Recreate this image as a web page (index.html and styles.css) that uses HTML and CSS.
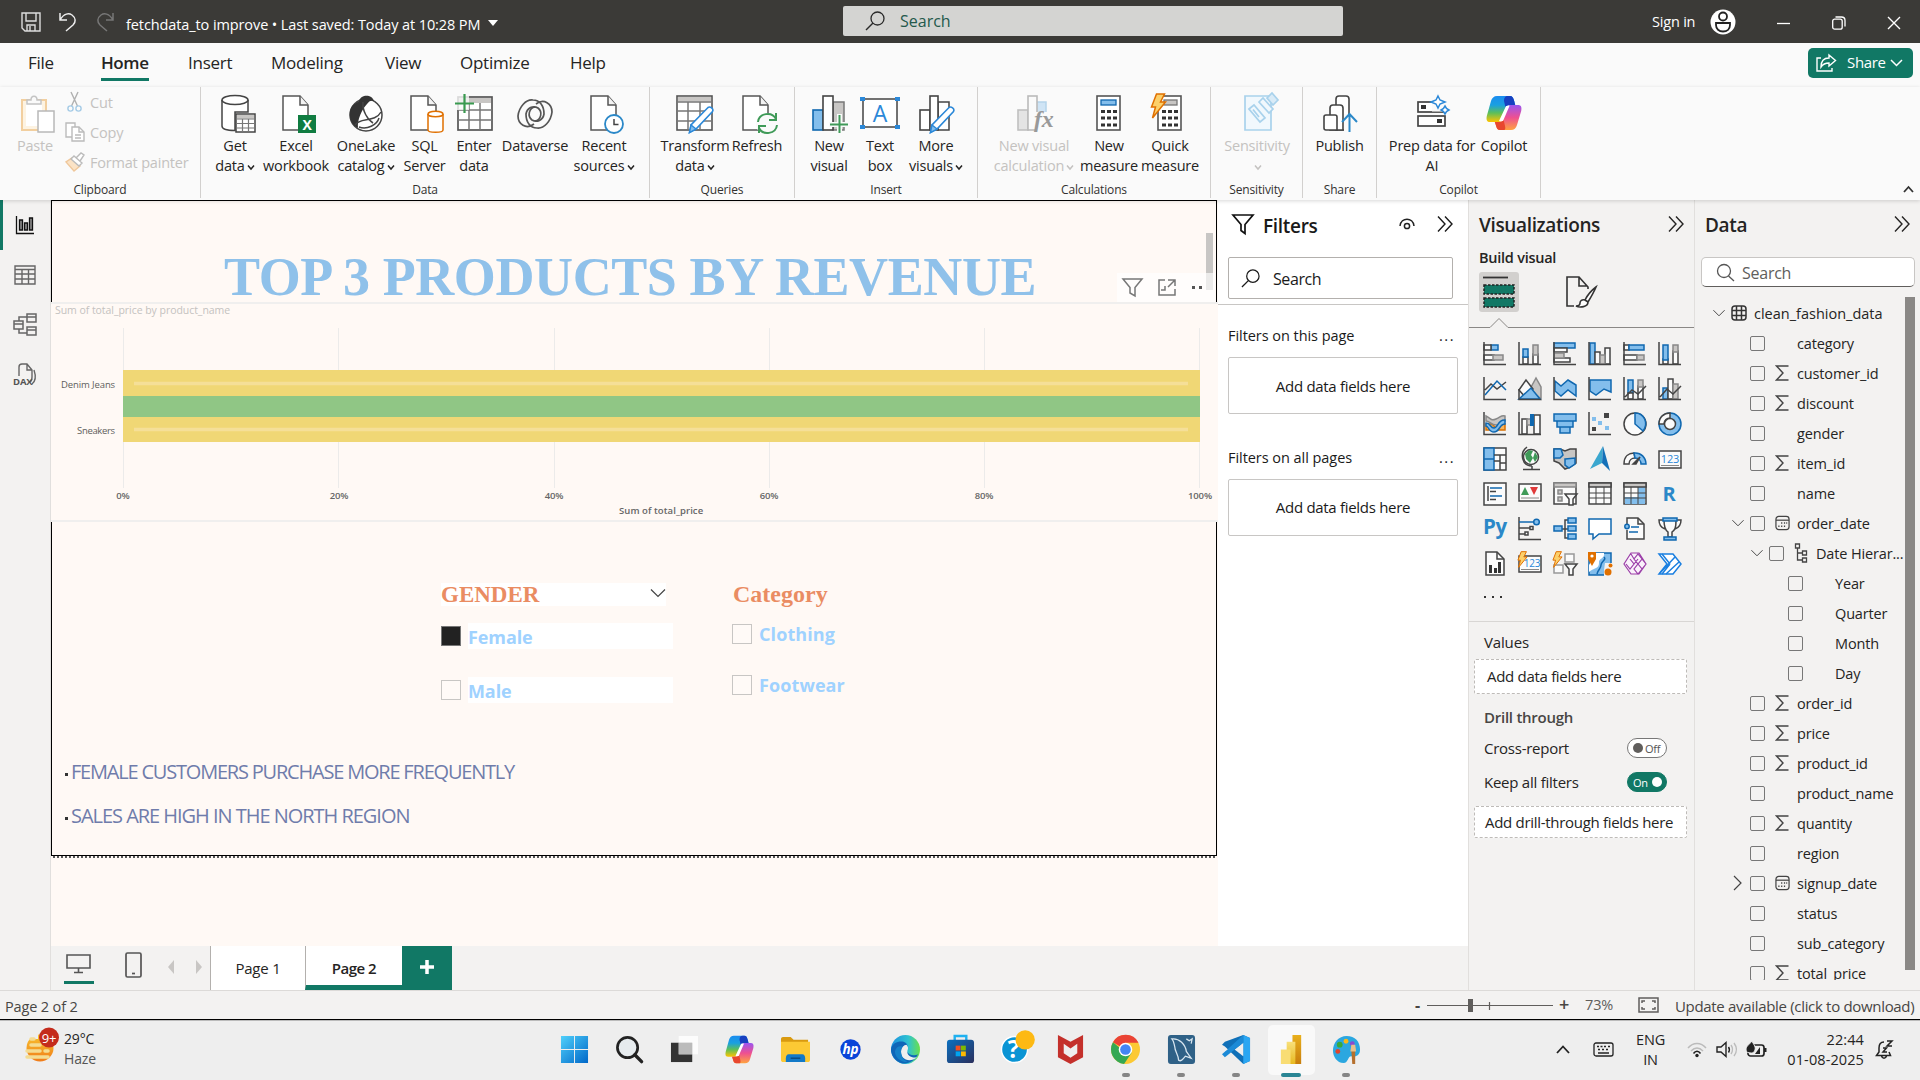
FILE: index.html
```html
<!DOCTYPE html>
<html lang="en">
<head>
<meta charset="utf-8">
<title>fetchdata_to improve</title>
<link rel="stylesheet" href="styles.css">
</head>
<body>
<svg class="defs" width="0" height="0">
  <defs>
    <linearGradient id="cpA" x1="0" y1="0" x2="0" y2="1"><stop offset="0" stop-color="#1a8cf0"/><stop offset=".35" stop-color="#1aa0e0"/><stop offset=".65" stop-color="#5cbf5a"/><stop offset="1" stop-color="#ffc400"/></linearGradient>
    <linearGradient id="cpB" x1="0" y1="0" x2="0" y2="1"><stop offset="0" stop-color="#9a55f0"/><stop offset=".5" stop-color="#ee5091"/><stop offset="1" stop-color="#ffa33f"/></linearGradient>
    <linearGradient id="win" x1="0" y1="0" x2="1" y2="1"><stop offset="0" stop-color="#4fd0fb"/><stop offset="1" stop-color="#0067c8"/></linearGradient>
    <linearGradient id="edg" x1="0" y1="0" x2="1" y2="0"><stop offset="0" stop-color="#1b8fe0"/><stop offset=".6" stop-color="#2fc3d0"/><stop offset="1" stop-color="#6be04a"/></linearGradient>
    <linearGradient id="sto" x1="0" y1="0" x2="1" y2="1"><stop offset="0" stop-color="#0b70c0"/><stop offset="1" stop-color="#2b2f5c"/></linearGradient>
    <linearGradient id="sun" x1="0" y1="0" x2="0" y2="1"><stop offset="0" stop-color="#f8c12e"/><stop offset="1" stop-color="#f07c1a"/></linearGradient>
    <linearGradient id="gold" x1="0" y1="0" x2="0" y2="1"><stop offset="0" stop-color="#e9b01c"/><stop offset="1" stop-color="#c87e0e"/></linearGradient>
    <linearGradient id="gold2" x1="0" y1="0" x2="0" y2="1"><stop offset="0" stop-color="#f8e07a"/><stop offset="1" stop-color="#e8b920"/></linearGradient>
    <symbol id="copilot" viewBox="0 0 36 36">
      <path d="M11 1h13c2.500 0 3.500 2 4.200 5l1 4h-6c-2 0-3 1-3.700 4l-3 9c-1 3-2 4-4 4H4c-3 0-4-2-3.200-6L5 6c.8-3 3-5 6-5z" fill="url(#cpA)"/>
      <path d="M22 1h2c2.500 0 3.500 2 4.200 5l1 4h-6c-2 0-3 1-3.700 2.500L18 6c0-3 1-5 4-5z" fill="#1740c0"/>
      <path d="M25 35H14c-2.500 0-3.500-2-4.200-5l-1-3h5c2 0 3-1 3.700-4l3-9c1-3 2-4 4-4H32c3 0 4 2 3.200 6L31 30c-.8 3-3 5-6 5z" fill="url(#cpB)"/>
      <path d="M14 35c-2.500 0-3.500-2-4.200-5l-1-3h5c2 0 3-1 3.700-2.500L19 31c.5 2 .5 4-1 4z" fill="#e8472f"/>
      <path d="M20 11h3.500L17 26h-4z" fill="#fff"/>
    </symbol>
    <symbol id="sigma" viewBox="0 0 15 16"><path d="M13.500 1H1.500l6.500 7-6.500 7h12" fill="none" stroke="#444" stroke-width="1.400"/></symbol>
    <symbol id="cal" viewBox="0 0 16 16"><rect x="1" y="1" width="14" height="14" rx="3" fill="none" stroke="#444" stroke-width="1.300"/><path d="M1 5h14" stroke="#444" stroke-width="1.300"/><path d="M6.500 8h1.300M9.500 8h1.300M12 8h1M3.500 11.500h1.300M6.500 11.500h1.300M9.500 11.500h1.300" stroke="#444" stroke-width="1.500"/></symbol>
    <symbol id="cd" viewBox="0 0 16 10"><path d="M1 1.500l7 7 7-7" fill="none" stroke="#444" stroke-width="1.200"/></symbol>
    <symbol id="dd" viewBox="0 0 8 7"><path d="M1 1.500l3 3.500 3-3.500" fill="none" stroke="currentColor" stroke-width="1.500"/></symbol>
    <symbol id="dbl" viewBox="0 0 16 18"><path d="M1 1.500l7 7.500-7 7.500M8 1.500l7 7.500-7 7.500" fill="none" stroke="currentColor" stroke-width="1.400"/></symbol>
    <symbol id="doc" viewBox="0 0 36 40"><path d="M5 2h17l8 9v25H5z" fill="#fff" stroke="#555" stroke-width="1.500"/><path d="M22 2v9h8" fill="#f3f3f3" stroke="#555" stroke-width="1.500"/></symbol>
    <symbol id="mag" viewBox="0 0 20 20"><circle cx="12.500" cy="7.500" r="6.500" fill="none" stroke="currentColor" stroke-width="1.300"/><path d="M8 12l-7 7" stroke="currentColor" stroke-width="1.400"/></symbol>
    <symbol id="pencil" viewBox="0 0 26 28"><path d="M20 1.500c2-1.500 6 1 4.500 4L8 23l-6.500 3.500L3 19z" fill="#fff" stroke="#2b88d8" stroke-width="1.600"/><path d="M1.500 26.500L3 19l5 4z" fill="#83beec" stroke="#2b88d8" stroke-width="1.300"/></symbol>
    <symbol id="calc" viewBox="0 0 36 40"><rect x="6" y="2" width="23" height="34" fill="#fff" stroke="#555" stroke-width="1.600"/><path d="M10 16h4v3h-4zM16 16h4v3h-4zM22 16h4v3h-4zM10 22.500h4v3h-4zM16 22.500h4v3h-4zM22 22.500h4v3h-4zM10 29.500h4v3h-4zM16 29.500h4v3h-4zM22 29.500h4v3h-4z" fill="#333"/></symbol>
    <symbol id="bolt" viewBox="0 0 16 26"><path d="M6 1h8l-4 8h5L2 25l3-11H1z" fill="#fcd06a" stroke="#e07000" stroke-width="1.500"/></symbol>
  </defs>
</svg>

<header class="titlebar">
  <svg class="tb-save" width="20" height="20" viewBox="0 0 20 20" fill="none" stroke="#ddd" stroke-width="1.400"><path d="M1 1h18v18H4l-3-3zM5 1v8h10V1M6 19v-6h8v6M9 14v5"/></svg>
  <svg class="tb-undo" width="18" height="20" viewBox="0 0 18 20" fill="none" stroke="#eee" stroke-width="1.500"><path d="M1 1v7h7M1 8c4-7 9-7 12-5 4 3 4 7 1 10l-7 6"/></svg>
  <svg class="tb-redo" width="18" height="20" viewBox="0 0 18 20" fill="none" stroke="#777" stroke-width="1.500"><path d="M17 1v7h-7M17 8C13 1 8 1 5 3 1 6 1 10 4 13l7 6"/></svg>
  <span class="doc-title">fetchdata_to improve • Last saved: Today at 10:28 PM</span>
  <i class="tb-caret"></i>
  <div class="tb-search"><svg width="20" height="20"><use href="#mag"/></svg><span>Search</span></div>
  <span class="signin">Sign in</span>
  <svg class="avatar" width="26" height="26" viewBox="0 0 26 26"><circle cx="13" cy="13" r="12.500" fill="#fff"/><circle cx="13" cy="7.500" r="4" fill="none" stroke="#222" stroke-width="1.800"/><path d="M6 14h14v2c0 4-3 6.500-7 6.500S6 20 6 16z" fill="none" stroke="#222" stroke-width="1.800"/></svg>
  <svg class="wb wb-min" width="14" height="14"><path d="M0 7.500h13" stroke="#fff" stroke-width="1.300"/></svg>
  <svg class="wb wb-res" width="14" height="14" fill="none" stroke="#fff" stroke-width="1.300"><rect x=".7" y="3.200" width="9.500" height="10" rx="2"/><path d="M3.500 1h6c2 0 3.500 1.500 3.500 3.500v6"/></svg>
  <svg class="wb" width="14" height="14"><path d="M1 1l12 12M13 1L1 13" stroke="#fff" stroke-width="1.400"/></svg>
</header>

<nav class="menu">
  <span class="m-file">File</span><span class="m-home active">Home</span><span class="m-insert">Insert</span><span class="m-modeling">Modeling</span><span class="m-view">View</span><span class="m-optimize">Optimize</span><span class="m-help">Help</span>
  <div class="share-btn"><svg width="21" height="18" viewBox="0 0 21 18" fill="none" stroke="#fff" stroke-width="1.400"><path d="M5 4H1v13h15v-3M13 1l6.500 5.500L13 12V9c-4 0-6 1-8 4 0-6 3-9 8-9z"/></svg><span>Share</span><svg width="13" height="8" viewBox="0 0 13 8"><path d="M1 1l5.500 5.500L12 1" fill="none" stroke="#fff" stroke-width="1.500"/></svg></div>
</nav>

<section class="ribbon">
  <div class="group g-clip">
    <div class="tools">
      <div class="rb dim w-paste"><svg width="36" height="40" viewBox="0 0 36 40"><rect x="2" y="6" width="24" height="30" fill="#fdf3e2" stroke="#f2cf9f" stroke-width="2"/><rect x="6" y="9" width="16" height="23" fill="#fff"/><path d="M7 10V6h4c0-5 6-5 6 0h4v4z" fill="#fafafa" stroke="#c4c4c4" stroke-width="1.500"/><rect x="18" y="17" width="16" height="21" fill="#fff" stroke="#b8b8b8" stroke-width="1.500"/></svg><span>Paste</span></div>
      <div class="clip-list dim">
        <div><svg width="20" height="20" viewBox="0 0 20 20" fill="none" stroke="#b0b0b0" stroke-width="1.400"><path d="M6 0l6.500 14M13 0L6.500 14"/><circle cx="5.500" cy="16.500" r="2.600" stroke="#a5cbe6"/><circle cx="13.500" cy="16.500" r="2.600" stroke="#a5cbe6"/></svg><span>Cut</span></div>
        <div><svg width="20" height="20" viewBox="0 0 20 20" fill="#fff" stroke="#bbb" stroke-width="1.400"><path d="M1 1h9v14H1z"/><path d="M7 5h7l5 5v9H7z"/><path d="M14 5v5h5M10 13h6M10 16h6" fill="none"/></svg><span>Copy</span></div>
        <div><svg width="20" height="20" viewBox="0 0 20 20" fill="#fff" stroke="#bbb" stroke-width="1.400"><path d="M7 6l8 8-6 5-8-9z" fill="#fbe3c6" stroke="#efc79b"/><path d="M6 7l3-3 8 7-3 3zM11 6l5-5 3 2-4 6"/></svg><span>Format painter</span></div>
      </div>
    </div>
    <span class="cap">Clipboard</span>
  </div>

  <div class="group g-data">
    <div class="tools">
      <div class="rb w60"><svg class="r3" width="36" height="40" viewBox="0 0 36 40"><path d="M2 6v26c0 3 6 4.500 13 4.500V18h13V6" fill="#fff" stroke="#444" stroke-width="1.500"/><ellipse cx="15" cy="6" rx="13" ry="4.500" fill="#fff" stroke="#444" stroke-width="1.500"/><rect x="16" y="20" width="19" height="18" fill="#fff" stroke="#444" stroke-width="1.500"/><rect x="17" y="21" width="17" height="3.500" fill="#c8c6c4"/><path d="M16 25h19M16 29.500h19M16 34h19M22.500 25v13M28.500 25v13" stroke="#777" stroke-width="1.200"/></svg><span>Get<br>data<svg class="dd" width="8" height="7"><use href="#dd"/></svg></span></div>
      <div class="rb w62"><svg width="36" height="40" viewBox="0 0 36 40"><use href="#doc"/><rect x="20" y="21" width="18" height="18" fill="#107c41"/><text x="29" y="35.500" text-anchor="middle" font-size="14" font-weight="700" fill="#fff">X</text></svg><span>Excel<br>workbook</span></div>
      <div class="rb w78"><svg width="36" height="40" viewBox="0 0 36 40"><ellipse cx="18" cy="21" rx="16" ry="16" fill="#fff" stroke="#444" stroke-width="1.500"/><path d="M11 7C13 0 24 0 26 7c-3-1-5 0-7 3C14 15 9 26 10 34 0 30-1 13 8 9z" fill="#333"/><path d="M15 8c-1 9 5 18 10 21M7 31c5-8 20-2 26-13M11 33c8 3 18-2 20-9" fill="none" stroke="#444" stroke-width="1.500"/></svg><span>OneLake<br>catalog<svg class="dd" width="8" height="7"><use href="#dd"/></svg></span></div>
      <div class="rb w39"><svg width="36" height="40" viewBox="0 0 36 40"><use href="#doc" x="-1"/><path d="M21 20v16c0 3 15 3 15 0V20" fill="#fff" stroke="#e07000" stroke-width="1.500"/><ellipse cx="28.500" cy="20" rx="7.500" ry="2.800" fill="#fff" stroke="#e07000" stroke-width="1.500"/></svg><span>SQL<br>Server</span></div>
      <div class="rb w60"><svg width="40" height="40" viewBox="0 0 40 40"><rect x="4" y="3" width="34" height="33" fill="#fff" stroke="#555" stroke-width="1.700"/><rect x="5" y="4" width="32" height="5" fill="#c8c6c4"/><path d="M4 16h34M4 26h34M15 9v27M26 9v27" stroke="#777" stroke-width="1.500"/><path d="M0 0h15v16H0z" fill="#fafafa" opacity=".8"/><path d="M1 9.500h19M10.500 0v19" stroke="#3a9a50" stroke-width="2.200"/></svg><span>Enter<br>data</span></div>
      <div class="rb w62"><svg width="36" height="40" viewBox="0 0 36 40" fill="none" stroke="#555" stroke-width="1.700"><path d="M17 30C9 36 1 30 1 22 2 13 9 5 16 6c7 0 11 6 11 14-1 6-7 9-12 6-5-4-3-12 3-13"/><path d="M19 10c8-6 16 0 16 8-1 9-8 17-15 16-7 0-11-6-11-14 1-6 7-9 12-6 5 4 3 12-3 13"/></svg><span>Dataverse</span></div>
      <div class="rb w76"><svg width="36" height="40" viewBox="0 0 36 40"><use href="#doc"/><circle cx="28" cy="30" r="9" fill="#fff" stroke="#2b88c8" stroke-width="1.800"/><path d="M28 25v5.500h4.500" fill="none" stroke="#444" stroke-width="1.500"/></svg><span>Recent<br>sources<svg class="dd" width="8" height="7"><use href="#dd"/></svg></span></div>
    </div>
    <span class="cap">Data</span>
  </div>

  <div class="group g-query">
    <div class="tools">
      <div class="rb w66"><svg width="38" height="40" viewBox="0 0 38 40"><rect x="1" y="2" width="35" height="34" fill="#fff" stroke="#555" stroke-width="1.600"/><rect x="2" y="3" width="33" height="4.500" fill="#c8c6c4"/><path d="M1 8h35M1 17h35M1 27h35M12 8v28M24 8v28" stroke="#777" stroke-width="1.500"/><use href="#pencil" x="12" y="12" width="26" height="28"/></svg><span>Transform<br>data<svg class="dd" width="8" height="7"><use href="#dd"/></svg></span></div>
      <div class="rb w58"><svg width="36" height="40" viewBox="0 0 36 40"><use href="#doc" x="-1"/><circle cx="28" cy="30" r="11" fill="#fafafa"/><path d="M19 28c1-9 14-11 18-3M37 19v7h-7M38 31c-1 9-14 11-18 3M20 39v-7h7" fill="none" stroke="#3f9a58" stroke-width="2"/></svg><span>Refresh</span></div>
    </div>
    <span class="cap">Queries</span>
  </div>

  <div class="group g-insert">
    <div class="tools">
      <div class="rb w52"><svg width="36" height="40" viewBox="0 0 36 40"><rect x="22" y="8" width="11" height="28" fill="#c8c6c4" stroke="#777" stroke-width="1.500"/><rect x="2" y="16" width="10" height="20" fill="#83beec" stroke="#1068b0" stroke-width="1.600"/><rect x="12" y="2" width="10" height="34" fill="#fff" stroke="#444" stroke-width="1.600"/><path d="M18 30.500h19M28.500 20v19" stroke="#fafafa" stroke-width="5"/><path d="M19 30.500h18M28.500 21v18" stroke="#3f9a58" stroke-width="2"/></svg><span>New<br>visual</span></div>
      <div class="rb w50"><svg width="40" height="40" viewBox="0 0 40 40"><rect x="3" y="5" width="34" height="28" fill="#fff" stroke="#444" stroke-width="1.500"/><path d="M0 3h5v4H0zM35 3h5v4h-5zM0 31h5v4H0zM35 31h5v4h-5z" fill="#2b88d8"/><text x="20" y="27.500" text-anchor="middle" font-size="23" fill="#2b88d8">A</text></svg><span>Text<br>box</span></div>
      <div class="rb w62"><svg width="36" height="40" viewBox="0 0 36 40"><rect x="20" y="8" width="11" height="28" fill="#fff" stroke="#444" stroke-width="1.500"/><rect x="2" y="16" width="10" height="20" fill="#fff" stroke="#444" stroke-width="1.600"/><rect x="12" y="2" width="8" height="34" fill="#fff" stroke="#444" stroke-width="1.600"/><use href="#pencil" x="11" y="12" width="26" height="28"/></svg><span>More<br>visuals<svg class="dd" width="8" height="7"><use href="#dd"/></svg></span></div>
    </div>
    <span class="cap">Insert</span>
  </div>

  <div class="group g-calc">
    <div class="tools">
      <div class="rb dim w88"><svg width="36" height="40" viewBox="0 0 36 40"><rect x="20" y="8" width="10" height="18" fill="#cfe4f5" stroke="#b5d4ea" stroke-width="1.500"/><rect x="2" y="16" width="10" height="20" fill="#e4e4e4" stroke="#c0c0c0" stroke-width="1.600"/><rect x="12" y="2" width="9" height="34" fill="#fafafa" stroke="#bbb" stroke-width="1.600"/><path d="M19 18h20v22H19z" fill="#fafafa"/><text x="18" y="33" class="fx" font-size="24" fill="#999">fx</text></svg><span>New visual<br>calculation<svg class="dd" width="8" height="7"><use href="#dd"/></svg></span></div>
      <div class="rb w62"><svg width="36" height="40" viewBox="0 0 36 40"><use href="#calc"/><rect x="10" y="6" width="15" height="5" fill="#83beec" stroke="#1068b0" stroke-width="1.300"/></svg><span>New<br>measure</span></div>
      <div class="rb w60"><svg width="36" height="40" viewBox="0 0 36 40"><use href="#calc" x="0"/><rect x="12" y="6" width="13" height="5" fill="#c8c6c4" stroke="#777" stroke-width="1.300"/><use href="#bolt" x="-2" y="-1" width="17" height="26"/></svg><span>Quick<br>measure</span></div>
    </div>
    <span class="cap">Calculations</span>
  </div>

  <div class="group g-sens">
    <div class="tools">
      <div class="rb dim w92"><svg width="40" height="40" viewBox="0 0 40 40" fill="#f1f8fd" stroke="#a9d2ec" stroke-width="1.700"><path d="M8 2h26v34H8z"/><path d="M12 15l5-4 11 13-5 4zM16 15.500l6 7.500"/><path d="M22 8l4-4 10 11-4 4z"/><path d="M30 4l5-5 6 7-5 5z" fill="#d9ebf7"/></svg><span>Sensitivity<br><svg class="dd" width="8" height="7"><use href="#dd"/></svg></span></div>
    </div>
    <span class="cap">Sensitivity</span>
  </div>

  <div class="group g-share">
    <div class="tools">
      <div class="rb w73"><svg width="36" height="40" viewBox="0 0 36 40" fill="#fff" stroke="#444" stroke-width="1.600"><path d="M14 36V5c0-2 1-3 3-3h7c2 0 3 1 3 3v31z"/><path d="M8 36V14c0-2 1-3 3-3h7c2 0 3 1 3 3v22z"/><path d="M2 34V23c0-1 1-2 2-2h9c1 0 2 1 2 2v13H4c-1 0-2-1-2-2z"/><path d="M22 20h12v18H22z" fill="#fafafa" stroke="none"/><path d="M27.500 38V20M20 28l7.500-8 7.500 8" fill="none" stroke="#2b88c8" stroke-width="2"/></svg><span>Publish</span></div>
    </div>
    <span class="cap">Share</span>
  </div>

  <div class="group g-copilot">
    <div class="tools">
      <div class="rb w90"><svg width="36" height="40" viewBox="0 0 36 40" fill="#fff" stroke="#444" stroke-width="1.700"><rect x="4" y="8" width="27" height="10"/><rect x="4" y="22" width="27" height="10"/><path d="M7 11h5v4H7zM23 25h5v4h-5z" fill="#333" stroke="none"/><path d="M18 4h19v13.500H18z" fill="#fafafa" stroke="none"/><path d="M24 2l2 4 5 2-5 2-2 4-2-4-5-2 5-2zM31 12l1.500 2.500L35 16l-2.500 1.500L31 20l-1.500-2.500L27 16l2.500-1.500z" stroke="#2b88d8" stroke-width="1.500"/></svg><span>Prep data for<br>AI</span></div>
      <div class="rb w54"><svg width="38" height="36" class="cop"><use href="#copilot"/></svg><span>Copilot</span></div>
    </div>
    <span class="cap">Copilot</span>
  </div>
  <svg class="collapse" width="11" height="9" viewBox="0 0 11 9"><path d="M1 7l4.500-5L10 7" fill="none" stroke="#333" stroke-width="1.800"/></svg>
</section>

<main class="work">
  <aside class="rail">
    <div class="on"><svg width="20" height="20" viewBox="0 0 20 20" fill="#888" stroke="#111" stroke-width="1.300"><path d="M1.500 1v17.500H19" fill="none"/><path d="M4.500 5h3v10h-3zM9.500 8h3v7h-3zM14.500 3h3v12h-3z"/></svg></div>
    <div><svg width="22" height="20" viewBox="0 0 22 20" fill="none" stroke="#666" stroke-width="1.400"><path d="M1 1h20v18H1zM1 4.500h20M1 9h20M1 14h20M8 4.500V19M14.500 4.500V19"/></svg></div>
    <div><svg width="24" height="24" viewBox="0 0 24 24" fill="#f3f2f1" stroke="#666" stroke-width="1.500"><path d="M6 8V4h8M6 16v4h8" fill="none"/><path d="M1 8h9v8H1zM14 1h9v8h-9zM14 14h9v8h-9zM1 11h9M14 4h9M14 17h9"/></svg></div>
    <div><svg width="24" height="24" viewBox="0 0 24 24" fill="none" stroke="#666" stroke-width="1.400"><path d="M6 13V4c0-2 1-3 3-3h5l5 6v7c0 2 0 4-2 5M14 1v6h5M21 7c2 6 2 11-2 14"/><text x="0" y="22" font-size="9.500" font-weight="700" fill="#555" stroke="none">DAX</text></svg></div>
  </aside>

  <div class="center">
    <div class="stage">
      <div class="canvas">
        <div class="page"></div>
        <div class="dots"></div>
        <h1 class="headline">TOP 3 PRODUCTS BY REVENUE</h1>
        <i class="cscroll"></i>
        <div class="vactions">
          <svg width="21" height="19" viewBox="0 0 21 19" fill="none" stroke="#777" stroke-width="1.500"><path d="M1 1h19l-7 8.500V18l-5-3V9.500z"/></svg>
          <svg width="18" height="17" viewBox="0 0 18 17" fill="none" stroke="#777" stroke-width="1.500"><path d="M7 1H1v15h16v-6M10 1h7v6M17 1l-7 7M7 7v4H3"/></svg>
          <svg width="13" height="3" viewBox="0 0 13 3" fill="#555"><path d="M1 0h3v3H1zM8 0h3v3H8z"/></svg>
        </div>
        <svg class="chart" width="1167" height="220" viewBox="0 0 1167 220">
          <rect width="1167" height="220" fill="#fff9f5"/>
          <path d="M0 1h1167M0 219h1167" stroke="#f0efee" stroke-width="2"/>
          <path d="M72.500 26v160M287.500 26v160M503.500 26v160M718.500 26v160M933.500 26v160M1148.500 26v160" stroke="#ecebea"/>
          <rect x="72" y="68" width="1077" height="72" fill="#f0d775"/>
          <rect x="72" y="94" width="1077" height="21" fill="#90c685"/>
          <path d="M83 81.500h1054M83 127.500h1054" stroke="#f5df98" stroke-width="3.500"/>
          <text x="4" y="12" class="c-title" textLength="175">Sum of total_price by product_name</text>
          <text x="10" y="86" class="c-cat" textLength="54">Denim Jeans</text>
          <text x="26" y="132" class="c-cat" textLength="38">Sneakers</text>
          <g class="c-ax"><text x="72" y="197">0%</text><text x="288" y="197">20%</text><text x="503" y="197">40%</text><text x="718" y="197">60%</text><text x="933" y="197">80%</text><text x="1149" y="197">100%</text><text x="610" y="212" textLength="84">Sum of total_price</text></g>
        </svg>
        <div class="slicer gender">
          <div class="s-head"><span>GENDER</span><svg width="16" height="10"><use href="#cd"/></svg></div>
          <div class="s-row"><i class="box full"></i><span>Female</span></div>
          <div class="s-row"><i class="box"></i><span>Male</span></div>
        </div>
        <div class="slicer category">
          <div class="s-head"><span>Category</span></div>
          <div class="s-row"><i class="box"></i><span>Clothing</span></div>
          <div class="s-row"><i class="box"></i><span>Footwear</span></div>
        </div>
        <div class="notes"><p><i></i><span class="n1">FEMALE CUSTOMERS PURCHASE MORE FREQUENTLY</span></p><p><i></i><span class="n2">SALES ARE HIGH IN THE NORTH REGION</span></p></div>
      </div>

      <aside class="filters">
        <div class="f-top">
          <div class="f-head"><svg width="22" height="21" viewBox="0 0 22 21" fill="none" stroke="#111" stroke-width="1.700"><path d="M1 1h20l-8 9.500v9l-4-3v-6z"/></svg><b>Filters</b><svg class="eye" width="16" height="12" viewBox="0 0 16 12" fill="none" stroke="#222" stroke-width="1.500"><path d="M1 8C2-1 14-1 15 8"/><circle cx="8" cy="8" r="2.600"/></svg><svg width="16" height="18"><use href="#dbl"/></svg></div>
          <div class="f-search"><svg width="19" height="19"><use href="#mag"/></svg><span>Search</span></div>
        </div>
        <div class="f-row"><span>Filters on this page</span><em>...</em></div>
        <div class="f-box">Add data fields here</div>
        <div class="f-row second"><span>Filters on all pages</span><em>...</em></div>
        <div class="f-box">Add data fields here</div>
      </aside>
    </div>

    <div class="tabs">
      <div class="t-desk"><svg width="25" height="20" viewBox="0 0 25 20" fill="none" stroke="#555" stroke-width="1.600"><path d="M1 1h23v13H1zM12.500 14v4M8 18.500h9"/></svg></div>
      <svg class="t-phone" width="17" height="26" viewBox="0 0 17 26" fill="none" stroke="#555" stroke-width="1.700"><rect x="1" y="1" width="15" height="24" rx="1.500"/><path d="M7 21.500h3"/></svg>
      <i class="arr l"></i><i class="arr r"></i>
      <span class="tab">Page 1</span><span class="tab cur">Page 2</span>
      <div class="add"><svg width="14" height="14"><path d="M7 0v14M0 7h14" stroke="#fff" stroke-width="3.500"/></svg></div>
    </div>
  </div>

  <aside class="viz">
    <div class="p-head"><b>Visualizations</b><svg width="16" height="18"><use href="#dbl"/></svg></div>
    <div class="v-sub">Build visual</div>
    <div class="v-tabs">
      <div class="v-sel"><svg width="32" height="32" viewBox="0 0 32 32"><path d="M0 1.500h25" stroke="#333" stroke-width="1.800"/><g fill="#117865" stroke="#222" stroke-width="1.500" stroke-dasharray="2.500 1.500"><rect x="1" y="9" width="30" height="9"/><rect x="1" y="22" width="30" height="9"/></g></svg></div>
      <svg class="v-brush" width="31" height="31" viewBox="0 0 31 31" fill="none" stroke="#333" stroke-width="1.600"><path d="M8 30H1V1h12l9 10v2M13 1v9h8"/><path d="M30 11c-4 3-9 9-11 13l3 2c3-5 6-10 8-15zM19 24c-3-1-5 1-5 3s-2 3-4 3c4 2 12 1 12-4z" fill="#fff"/></svg>
    </div>
    <svg class="v-line" width="225" height="11" viewBox="0 0 225 11"><path d="M0 10.500h21l9-9 9 9h186" fill="none" stroke="#8a8886"/></svg>
    <div class="v-grid">
      <svg viewBox="0 0 24 24"><path class="b" d="M8 3h7v5H8z"/><path class="w" d="M1 3h7v5H1zM1 13h10v5H1z"/><path class="g" d="M10 13h10v5H10z"/><path d="M1 0v22.500h22"/></svg>
      <svg viewBox="0 0 24 24"><path class="w" d="M5 15h5v7H5zM15 12h5v10h-5z"/><path class="b" d="M5 7h5v8H5z"/><path class="g" d="M15 3h5v10h-5z"/><path d="M1 0v22.500h22"/></svg>
      <svg viewBox="0 0 24 24"><path class="b" d="M1 1h21v5H1z"/><path class="w" d="M1 6h13v4H1zM1 16h16v4H1z"/><path class="g" d="M1 11h10v5H1z"/><path d="M1 0v22.500h22"/></svg>
      <svg viewBox="0 0 24 24"><path class="b" d="M2 1h5v21H2z"/><path class="w" d="M7 10h5v12H7zM17 6h5v16h-5z"/><path class="g" d="M12 13h5v9h-5z"/><path d="M1 0v22.500h22"/></svg>
      <svg viewBox="0 0 24 24"><path class="w" d="M1 3h5v5H1zM1 13h13v5H1z"/><path class="b" d="M6 3h15v5H6z"/><path class="g" d="M14 13h7v5h-7z"/><path d="M1 0v22.500h22"/></svg>
      <svg viewBox="0 0 24 24"><path class="w" d="M5 17h5v5H5zM15 9h5v13h-5z"/><path class="b" d="M5 3h5v15H5z"/><path class="g" d="M15 3h5v7h-5z"/><path d="M1 0v22.500h22"/></svg>

      <svg viewBox="0 0 24 24"><path d="M1 0v22.500h22M2 13l6-6 6 5 9-7"/><path class="bl" d="M2 18L14 4l9 9"/></svg>
      <svg viewBox="0 0 24 24"><path class="g" d="M12 12l6-11 5 9v12z"/><path class="w" d="M1 13L8 3l7 9-7 9z"/><path class="b" d="M1 22l12-11 9 11z"/><path d="M1 12v10.500h22"/></svg>
      <svg viewBox="0 0 24 24"><path class="b" d="M2 4l6 5 7-6 8 5v11l-8-6-7 6-6-5z"/><path d="M1 0v22.500h22"/></svg>
      <svg viewBox="0 0 24 24"><path class="b" d="M2 3h21v12l-7-3-8 6-6-4z"/><path d="M1 0v22.500h22"/></svg>
      <svg viewBox="0 0 24 24"><path class="b" d="M5 3h5v13H5z"/><path class="w" d="M5 16h5v6H5zM15 9h5v13h-5z"/><path class="g" d="M15 3h5v7h-5z"/><path d="M1 0v22.500h22M2 20l7-7 6 4 8-8"/></svg>
      <svg viewBox="0 0 24 24"><path class="b" d="M5 11h5v11H5z"/><path class="w" d="M10 2h5v20h-5z"/><path class="g" d="M15 7h5v15h-5z"/><path d="M1 0v22.500h22M2 20l7-8 6 5 8-8"/></svg>

      <svg viewBox="0 0 24 24"><path class="o" d="M3 12h6l4 4 4-4h5v6H3z"/><path class="g" d="M3 4c6 3 5 5 10 3s5-4 9-3v5c-6 0-4 4-9 4s-6-4-10-4z"/><path class="b" d="M3 11c5 0 4 5 8 5s4-9 11-8v4c-6 0-5 8-11 8s-5-6-8-6z"/><path d="M1 0v22.500h22"/></svg>
      <svg viewBox="0 0 24 24"><path class="w" d="M4 7h5v15H4zM16 3h6v19h-6z"/><path class="g" d="M9 7h4v6H9z"/><path fill="#1068b0" stroke="none" d="M12 2h4v12h-4z"/><path d="M1 0v22.500h22"/></svg>
      <svg viewBox="0 0 24 24"><path class="b" d="M1 2h22v7H1zM4 9h16v6H4zM7 15h10v6H7z"/></svg>
      <svg viewBox="0 0 24 24"><path d="M1 0v22.500h22"/><path fill="#444" stroke="none" d="M16 1h5v5h-5zM4 15h4v4H4z"/><path fill="#83beec" stroke="none" d="M4 5h4v4H4zM10 9h4v4h-4zM17 14h4v4h-4z"/></svg>
      <svg viewBox="0 0 24 24"><circle class="w" cx="12" cy="12" r="11"/><path class="b" d="M12 1v11l8 7c6-8 1-18-8-18z"/></svg>
      <svg viewBox="0 0 24 24"><circle class="b" cx="12" cy="12" r="11"/><path class="w" d="M12 1v5c-3 0-6 2-6 6H1C1 5 6 1 12 1z"/><circle class="w" cx="12" cy="12" r="5.500"/></svg>

      <svg viewBox="0 0 24 24"><path class="w" d="M1 1h22v22H1z"/><path class="b" d="M1 1h10v11H1zM1 12h10v11H1z"/><path d="M11 8h12M17 8v6M11 14h6M17 14v9M17 16h6"/></svg>
      <svg viewBox="0 0 24 24"><circle class="w" cx="13" cy="10" r="7.500"/><path fill="#3f9a58" stroke="none" d="M7 7l4-4 4 1-2 4 2 3-3 5-4-4zM17 5l3 5-3 5-2-4z"/><path d="M9 0C1 6 4 19 14 19M14 19v3.500M5 22.500h17"/></svg>
      <svg viewBox="0 0 24 24"><path class="g dk" d="M1 2h6l5 2 5-2h6v14l-6 4-5 2-6-6-5-2z"/><path class="b" d="M1 2h7l2 6-3 3H1zM12 12l10-1v6l-6 4-4-3z"/></svg>
      <svg viewBox="0 0 24 24"><path fill="#3aa7cf" stroke="none" d="M15-1L2 22l12-6z"/><path fill="#1470b8" stroke="none" d="M15-1l7 25-8-8z"/></svg>
      <svg viewBox="0 0 24 24"><path class="w" d="M1 17C1 9 6 6 11 6l1 5c-3 0-6 2-6 6z"/><path class="b" d="M11 6c7-1 12 5 12 11h-5c0-3-2-6-6-6z"/><path d="M10 17l7-7-4 7z" fill="#333"/></svg>
      <svg viewBox="0 0 24 24"><path class="w" d="M1 4h22v17H1z"/><path d="M3 18.500h18" stroke="#888" stroke-width="1"/><text x="12" y="15.500" text-anchor="middle" font-size="11" fill="#2b88d8" stroke="none">123</text></svg>

      <svg viewBox="0 0 24 24"><path class="w" d="M1 1h22v22H1z"/><path d="M5 4v15M7 9.500h6M7 17.500h6"/><path class="bl" d="M7 6h12M7 14h12"/></svg>
      <svg viewBox="0 0 24 24"><path class="w" d="M1 2h22v17H1z"/><path d="M3 16h18" stroke="#888" stroke-width="1"/><path fill="#3f9a58" stroke="none" d="M3 13l4-8 4 8z"/><path fill="#e03a3a" stroke="none" d="M12 5h8l-4 8z"/></svg>
      <svg viewBox="0 0 24 24"><path class="w" d="M1 1h22v21H1z"/><path class="g" d="M1 1h22v4H1zM5 8h4v4H5zM5 15h4v4H5z"/><path class="w" d="M12 12h12l-4 5v6h-4v-6z"/></svg>
      <svg viewBox="0 0 24 24"><path class="w" d="M1 1h22v21H1z"/><path class="g dk" d="M1 1h22v4H1z"/><path d="M1 11h22M1 16h22M8 5v17M16 5v17" stroke-width="1"/></svg>
      <svg viewBox="0 0 24 24"><path class="w" d="M1 1h22v21H1z"/><path fill="#83beec" stroke="none" d="M15 5h7v17H2v-7h13z"/><path class="g dk" d="M1 1h22v4H1z"/><path d="M1 11h22M1 16h22M8 5v17M15 5v17" stroke-width="1"/></svg>
      <svg viewBox="0 0 24 24"><text x="11" y="19" text-anchor="middle" font-size="20" font-weight="700" fill="#2b88c8" stroke="none">R</text></svg>

      <svg viewBox="0 0 24 24"><text x="12" y="17" text-anchor="middle" font-size="20.500" font-weight="700" fill="#2b88c8" stroke="none">Py</text></svg>
      <svg viewBox="0 0 24 24"><path d="M1 0v22.500h22M1 11h11M1 17h7"/><path class="bl" d="M1 5h15"/><circle class="b" cx="18.500" cy="5" r="2.800"/><path class="w" d="M12 9.500h3v3h-3zM7 15h3v3H7z"/></svg>
      <svg viewBox="0 0 24 24"><path d="M8 12h5M17 3h-5v18h5M13 12h3"/><path class="b" d="M1 9h8v5H1zM15 1h8v5h-8zM15 9h8v5h-8zM15 17h8v5h-8z"/></svg>
      <svg viewBox="0 0 24 24"><path fill="#fff" stroke="#1068b0" d="M1 2h22v15H11l-6 5v-5H1z"/></svg>
      <svg viewBox="0 0 24 24"><path class="w" d="M4 7V1h11l6 6v15H4v-9"/><path d="M15 1v6h6"/><path class="bl" d="M8 10h8M6 15h9"/><circle class="b" cx="4" cy="9.500" r="2.200"/></svg>
      <svg viewBox="0 0 24 24"><path class="w" d="M6 3H1c0 5 3 8 6 9M18 3h5c0 5-3 8-6 9M6 3h12c0 8-1 10-4 12v5h-4v-5c-3-2-4-5-4-12z"/><path class="b" d="M5 1h14v3H5zM6 20h12v3H6z"/></svg>

      <svg viewBox="0 0 24 24"><path class="w" d="M3 0h11l7 7v16H3z"/><path d="M14 0v7h7"/><path fill="#333" stroke="none" d="M6 13h3v8H6zM11 16h3v5h-3zM15 10h3v11h-3z"/></svg>
      <svg viewBox="0 0 24 24"><path class="w" d="M1 4h22v16H1z"/><path d="M3 17.500h18" stroke="#888" stroke-width="1"/><text x="14" y="15" text-anchor="middle" font-size="10" fill="#2b88d8" stroke="none">123</text><use href="#bolt" x="-1" y="-1" width="11" height="17"/></svg>
      <svg viewBox="0 0 24 24"><path class="w" d="M12 2h9v8h-9zM1 13h9v8H1z" stroke="#999"/><use href="#bolt" x="-1" y="-1" width="11" height="17"/><path class="w" d="M12 12h12l-4 5v6h-4v-6z"/></svg>
      <svg viewBox="0 0 24 24"><path class="b" d="M1 1h22v22H1z"/><path d="M8 1h8c1 6-6 5-5 10 0 6-6 5-10 9v-7z" fill="#fff" stroke="none"/><path d="M16 5c3 3-3 4-3 8s-3 4-4 9" fill="none" stroke="#1068b0"/><path fill="#e07000" stroke="none" d="M0 0h8v7l-4 7-4-7z"/><circle cx="4" cy="4" r="1.600" fill="#fff" stroke="none"/><path fill="#f3f2f1" stroke="none" d="M17 11h8v14h-9v-7z"/><circle cx="20" cy="20" r="3.500" fill="#e07000" stroke="none"/><circle cx="22.500" cy="13.500" r="2" fill="#e07000" stroke="none"/></svg>
      <svg viewBox="0 0 24 24" class="pu"><path d="M8 1h8l7 11-7 10H8L1 12zM15 2l4 5-4 5-4-5zM7 7l4 5-4 5-4-5M11 12l4-5M15 12l4 5-4 5-4-5zM8 2l3 5M19 7l4 5-4 5M11 12l-4-5"/></svg>
      <svg viewBox="0 0 24 24" class="pa"><path d="M1 2h14l8 10-8 10H1l8-10z"/><path d="M4 2l8 10M12 12L4 22M8 22l13-12M17 5L2 21" fill="none"/></svg>
    </div>
    <div class="v-more"><svg width="18" height="2" viewBox="0 0 18 2" fill="#333"><path d="M0 0h2v2H0zM8 0h2v2H8zM16 0h2v2h-2z"/></svg></div>
    <div class="v-wells">
      <div class="lbl">Values</div>
      <div class="well">Add data fields here</div>
      <div class="lbl drill">Drill through</div>
      <div class="opt"><span>Cross-report</span><div class="tog"><i></i><span>Off</span></div></div>
      <div class="opt keep"><span>Keep all filters</span><div class="tog on"><span>On</span><i></i></div></div>
      <div class="well dr">Add drill-through fields here</div>
    </div>
  </aside>

  <aside class="data">
    <div class="p-head"><b>Data</b><svg width="16" height="18"><use href="#dbl"/></svg></div>
    <div class="d-search"><svg width="19" height="19" viewBox="0 0 19 19" fill="none" stroke="#555" stroke-width="1.300"><circle cx="8" cy="8" r="6.500"/><path d="M12.500 13l5.500 5"/></svg><span>Search</span></div>
    <div class="tree-wrap">
      <div class="tree">
        <div class="row root"><svg class="ch" width="14" height="8"><use href="#cd"/></svg><svg class="tab-ic" width="16" height="16" viewBox="0 0 16 16" fill="none" stroke="#333" stroke-width="1.500"><rect x="1" y="1" width="14" height="14" rx="3"/><path d="M5.500 1v14M10.500 1v14M1 5.500h14M1 10.500h14"/></svg><span>clean_fashion_data</span></div>
        <div class="row"><i class="ch"></i><i class="cb"></i><i class="ic"></i><span>category</span></div>
        <div class="row"><i class="ch"></i><i class="cb"></i><svg class="ic" height="16"><use href="#sigma"/></svg><span>customer_id</span></div>
        <div class="row"><i class="ch"></i><i class="cb"></i><svg class="ic" height="16"><use href="#sigma"/></svg><span>discount</span></div>
        <div class="row"><i class="ch"></i><i class="cb"></i><i class="ic"></i><span>gender</span></div>
        <div class="row"><i class="ch"></i><i class="cb"></i><svg class="ic" height="16"><use href="#sigma"/></svg><span>item_id</span></div>
        <div class="row"><i class="ch"></i><i class="cb"></i><i class="ic"></i><span>name</span></div>
        <div class="row"><svg class="ch" width="14" height="8"><use href="#cd"/></svg><i class="cb"></i><svg class="ic" height="16"><use href="#cal"/></svg><span>order_date</span></div>
        <div class="row l2"><svg class="ch" width="14" height="8"><use href="#cd"/></svg><i class="cb"></i><svg class="ic" height="20" viewBox="0 0 15 20" fill="none" stroke="#444" stroke-width="1.300"><path d="M1.500 1h4v4h-4zM8.500 8h4v4h-4zM8.500 15h4v4h-4zM3.500 5v12h5M3.500 10h5"/></svg><span>Date Hierar...</span></div>
        <div class="row l3"><i class="ch"></i><i class="cb"></i><i class="ic"></i><span>Year</span></div>
        <div class="row l3"><i class="ch"></i><i class="cb"></i><i class="ic"></i><span>Quarter</span></div>
        <div class="row l3"><i class="ch"></i><i class="cb"></i><i class="ic"></i><span>Month</span></div>
        <div class="row l3"><i class="ch"></i><i class="cb"></i><i class="ic"></i><span>Day</span></div>
        <div class="row"><i class="ch"></i><i class="cb"></i><svg class="ic" height="16"><use href="#sigma"/></svg><span>order_id</span></div>
        <div class="row"><i class="ch"></i><i class="cb"></i><svg class="ic" height="16"><use href="#sigma"/></svg><span>price</span></div>
        <div class="row"><i class="ch"></i><i class="cb"></i><svg class="ic" height="16"><use href="#sigma"/></svg><span>product_id</span></div>
        <div class="row"><i class="ch"></i><i class="cb"></i><i class="ic"></i><span>product_name</span></div>
        <div class="row"><i class="ch"></i><i class="cb"></i><svg class="ic" height="16"><use href="#sigma"/></svg><span>quantity</span></div>
        <div class="row"><i class="ch"></i><i class="cb"></i><i class="ic"></i><span>region</span></div>
        <div class="row"><svg class="ch" height="14" viewBox="0 0 14 14"><path d="M3 0l7 7-7 7" fill="none" stroke="#444" stroke-width="1.200"/></svg><i class="cb"></i><svg class="ic" height="16"><use href="#cal"/></svg><span>signup_date</span></div>
        <div class="row"><i class="ch"></i><i class="cb"></i><i class="ic"></i><span>status</span></div>
        <div class="row"><i class="ch"></i><i class="cb"></i><i class="ic"></i><span>sub_category</span></div>
        <div class="row"><i class="ch"></i><i class="cb"></i><svg class="ic" height="16"><use href="#sigma"/></svg><span>total_price</span></div>
      </div>
      <i class="dscroll"></i>
    </div>
  </aside>
</main>

<footer class="status">
  <span class="pg">Page 2 of 2</span>
  <b class="minus">-</b>
  <svg class="slider" width="126" height="15" viewBox="0 0 126 15"><path d="M0 7.500h126M62.500 4v8" stroke="#605e5c" stroke-width="1.200"/><rect x="41" y="1" width="5" height="13" fill="#605e5c"/></svg>
  <b class="plus">+</b>
  <span class="pct">73%</span>
  <svg class="fit" width="21" height="16" viewBox="0 0 21 16" fill="none" stroke="#605e5c" stroke-width="1.500"><path d="M1 1h19v14H1zM4 6V4h3M14 4h3v2M4 10v2h3M14 12h3v-2"/></svg>
  <span class="upd">Update available (click to download)</span>
</footer>

<footer class="taskbar">
  <div class="weather">
    <svg width="38" height="40" viewBox="0 0 38 40"><circle cx="16" cy="21" r="13.500" fill="url(#sun)"/><path d="M0 2h14v10H0z" fill="#eee"/><path d="M7 12h3M7 18h9M3 24h13M21 24h3M3 30h21" stroke="#f4dc92" stroke-width="3.500" stroke-linecap="round"/><circle cx="25" cy="10.500" r="10" fill="#c42b1c"/><text x="25" y="15.500" text-anchor="middle" font-size="13" fill="#fff">9+</text></svg>
    <div><span>29°C</span><span class="hz">Haze</span></div>
  </div>
  <div class="apps">
    <div><svg viewBox="0 0 30 30"><path fill="url(#win)" d="M1 1h13.500v13.500H1zM15.500 1H29v13.500H15.500zM1 15.500h13.500V29H1zM15.500 15.500H29V29H15.500z"/></svg></div>
    <div><svg viewBox="0 0 30 30"><circle cx="13" cy="13" r="10.500" fill="#e6ebee" stroke="#222" stroke-width="2.800"/><path d="M20.500 20.500l7 7" stroke="#222" stroke-width="3.500" stroke-linecap="round"/></svg></div>
    <div><svg viewBox="0 0 30 30"><path d="M1 8h22v20H1z" fill="#333"/><path d="M9 1h20v19H9z" fill="#fff" opacity=".8"/><path d="M9 8h14v12H9z" fill="#bbb"/></svg></div>
    <div><svg viewBox="0 0 36 36"><use href="#copilot"/></svg></div>
    <div><svg viewBox="0 0 30 30"><path d="M0 4c0-1 1-2 2-2h8l3 3h15v8H0z" fill="#d99a10"/><path d="M0 7h30v19c0 1-1 2-2 2H2c-1 0-2-1-2-2z" fill="#fcc934"/><path d="M5 28v-4c0-2 1-4 3-4h14c2 0 3 2 3 4v4z" fill="#1279c8"/><path d="M10 24h10" stroke="#0a4a80" stroke-width="1.500"/></svg></div>
    <div><svg viewBox="0 0 30 30"><circle cx="15" cy="15" r="10.500" fill="#0a44d8"/><text x="15" y="20" text-anchor="middle" font-size="14" font-style="italic" font-weight="700" fill="#fff">hp</text></svg></div>
    <div><svg viewBox="0 0 30 30"><circle cx="15" cy="15" r="15" fill="url(#edg)"/><path d="M0 15C1 8 8 6 13 7c5 2 5 6 3 9 2 5 8 6 12 4-4 8-13 12-20 8-5-3-8-8-8-13z" fill="#0f66b8"/><path d="M16 10c-6 1-7 8-4 13 4 4 10 4 15 0-5 1-11-1-10-7 1-2 1-4-1-6z" fill="#eee"/><path d="M12 12c-3 4-2 12 5 16-8 0-13-6-13-11 1-4 4-6 8-5z" fill="#1580c8"/></svg></div>
    <div><svg viewBox="0 0 30 30"><path d="M9 6V1h12v5" fill="none" stroke="#1fb1f0" stroke-width="2.500"/><rect x="1" y="5" width="28" height="24" rx="3" fill="url(#sto)"/><path fill="#f25022" d="M10 11h5v5h-5z"/><path fill="#7fba00" d="M15.500 11h5v5h-5z"/><path fill="#00a4ef" d="M10 17h5v5h-5z"/><path fill="#ffb900" d="M15.500 17h5v5h-5z"/></svg></div>
    <div><svg viewBox="0 0 30 30"><circle cx="14" cy="15" r="13.500" fill="#0a94d4" stroke="#fff" stroke-width="1.500"/><text x="13" y="24" text-anchor="middle" font-size="25" font-weight="700" fill="#fff">?</text><circle cx="25" cy="5" r="10" fill="#fdb913"/></svg></div>
    <div><svg viewBox="0 0 30 30"><path d="M2 0l13 7 13-7v23l-13 7-13-7z" fill="#c4302b"/><path d="M8 9l7 5 7-5v10l-7 4.500L8 19z" fill="#eee"/></svg></div>
    <div class="run"><svg viewBox="0 0 30 30"><circle cx="15" cy="15" r="15" fill="#fcc934"/><path d="M15 15L2 7.500A15 15 0 0 1 28.500 8H15z" fill="#ea4335"/><path d="M2 7.500A15 15 0 0 0 13.500 29.900L21.500 18H15z" fill="#34a853"/><circle cx="15" cy="15" r="7" fill="#fff"/><circle cx="15" cy="15" r="5.500" fill="#4285f4"/></svg></div>
    <div class="run"><svg viewBox="0 0 30 30"><rect x="1" y="0" width="28" height="30" rx="3" fill="#2f6187"/><path d="M5 4c8-1 14 6 15 13l5 7-6-2c-3 3-4 6-7 4 0-5-4-9-4-14C7 8 7 6 5 4zM20 4l3 2 3-2-1 5" fill="none" stroke="#d8e6f0" stroke-width="1.300"/></svg></div>
    <div class="run"><svg viewBox="0 0 30 30"><path d="M22 0l7 3v24l-7 3L3 12l-3-2 3-3z" fill="#1070b8"/><path d="M22 0l7 3v24l-7 3z" fill="#2aa6f2"/><path d="M22 8v14l-9-7z" fill="#eee"/><path d="M0 20l3 3L22 8V0z" fill="#1c8ad6"/><path d="M0 13l6 2-6 3z" fill="#eee"/></svg></div>
    <div class="run big"><svg viewBox="0 0 30 30"><path d="M16 0h9v30h-9z" fill="url(#gold)"/><path d="M10 7h9v23h-9z" fill="url(#gold2)"/><path d="M4 15h10v15H4z" fill="#f9dd74"/></svg></div>
    <div class="run"><svg viewBox="0 0 30 30"><path d="M15 1c9 0 14 6 14 14 0 6-4 8-9 7-4 0-3 7-8 7C5 29 1 22 1 16 1 8 7 1 15 1z" fill="#2ba7e0"/><circle cx="8" cy="10" r="3" fill="#37a93c"/><circle cx="14.500" cy="6.500" r="2.500" fill="#f6b81a"/><circle cx="21" cy="9" r="2.500" fill="#8a4ad0"/><circle cx="6" cy="17" r="2.500" fill="#e0452c"/><path d="M20 16h4v14h-3z" fill="#b5702e"/><path d="M20 10h4l1 7h-6z" fill="#e8c08a"/></svg></div>
  </div>
  <div class="tray">
    <svg class="up" width="14" height="9"><path d="M1 8l6-6.500L13 8" fill="none" stroke="#222" stroke-width="1.800"/></svg>
    <svg class="kb" width="21" height="15" viewBox="0 0 21 15" fill="none" stroke="#222" stroke-width="1.300"><rect x="1" y="1" width="19" height="13" rx="2"/><path d="M4 4.500h2M7.500 4.500h2M11 4.500h2M15 4.500h2M5 7.500h2M9 7.500h2M13 7.500h2M5 11h11"/></svg>
    <div class="lang"><span>ENG</span><span>IN</span></div>
    <svg class="wifi" width="20" height="16" viewBox="0 0 20 16" fill="none" stroke="#bbb" stroke-width="1.500"><path d="M1 6c5-6 13-6 18 0M4 9c4-4 8-4 12 0"/><path d="M6.500 11.500c2-3 5-3 7 0" stroke="#222"/><circle cx="10" cy="13.500" r="1.700" fill="#222" stroke="none"/></svg>
    <svg class="vol" width="21" height="17" viewBox="0 0 21 17" fill="none" stroke="#222" stroke-width="1.400"><path d="M1 6h4l5-4.500v14L5 11H1zM12.500 6c1 1.500 1 4 0 5.500"/><path d="M15 4c2 3 2 6 0 9M18 2c3 4 3 9 0 13" stroke="#bbb"/></svg>
    <svg class="bat" width="21" height="17" viewBox="0 0 21 17"><rect x="2" y="4" width="16" height="11" rx="2.500" fill="none" stroke="#222" stroke-width="1.700"/><path d="M18 7h2.500v4H18z" fill="#222"/><path d="M9 13l5-7v7z" fill="#222"/><path d="M0 9c0-4 3-5 6-9 1 3 4 5 3 9-1 3-3 3-4 3-3 0-5-1-5-3z" fill="#222" stroke="#eee"/></svg>
    <div class="clock"><span>22:44</span><span>01-08-2025</span></div>
    <svg class="bell" width="18" height="19" viewBox="0 0 18 19" fill="none" stroke="#222" stroke-width="1.500"><path d="M9 2C5 2 4 5 4 8v4l-2.500 3.500h14L14 12M6.500 16c1 3 4 3 5 0M12 1h5l-5 5h5M8 8h3.500L8 12h4"/></svg>
  </div>
</footer>
</body>
</html>
```
FILE: styles.css
```css
* { box-sizing: border-box; }
body { margin: 0; width: 1920px; height: 1080px; overflow: hidden; font-family: "Open Sans", "Noto Sans", sans-serif; font-size: 15px; letter-spacing: -0.15px; color: #252423; background: #f3f2f1; display: flex; flex-direction: column; }
svg { flex: none; overflow: visible; display: block; }
i, em { font-style: normal; flex: none; display: block; }
.defs { position: absolute; }

/* title bar */
.titlebar { height: 43px; background: #3b3a37; color: #fff; display: flex; align-items: center; padding: 0 20px 0 21px; flex: none; }
.tb-undo { margin-left: 18px; }
.tb-redo { margin-left: 19px; }
.doc-title { margin: 6px 0 0 12px; width: 355px; font-size: 14.500px; letter-spacing: -0.1px; white-space: nowrap; flex: none; }
.tb-caret { margin: 3px 0 0 7px; border: 5.500px solid transparent; border-top: 6px solid #fff; border-bottom: 0; }
.tb-search { margin-left: 345px; margin-top: -1px; width: 500px; height: 30px; background: #d4d4d2; border-radius: 2px; display: flex; align-items: center; padding-left: 22px; color: #2a2a2a; flex: none; }
.tb-search span { margin-left: 15px; font-size: 16px; color: #24594c; letter-spacing: 0; }
.signin { margin-left: 309px; width: 46px; font-size: 14.500px; letter-spacing: -0.2px; white-space: nowrap; flex: none; }
.avatar { margin-left: 12px; margin-right: 41px; }
.wb { margin-top: 3px; }
.wb-min, .wb-res { margin-right: 41px; }

/* menu */
.menu { height: 44px; background: #fafafa; display: flex; flex: none; font-size: 17px; letter-spacing: -0.25px; line-height: 24px; padding: 7px 7px 0 28px; white-space: nowrap; }
.menu > span { padding-top: 1px; height: 31px; }
.menu .active { font-weight: 600; border-bottom: 3px solid #117865; letter-spacing: -0.4px; }
.m-file { width: 26px; margin-right: 47px; }
.m-home { width: 48px; margin-right: 39px; }
.m-insert { width: 43px; margin-right: 40px; }
.m-modeling { width: 73px; margin-right: 41px; }
.m-view { width: 36px; margin-right: 39px; }
.m-optimize { width: 70px; margin-right: 40px; }
.share-btn { margin-left: auto; margin-top: -2px; width: 105px; height: 30px; background: #117865; border-radius: 5px; color: #fff; font-size: 15px; display: flex; align-items: center; padding-left: 8px; }
.share-btn span { margin: -2px 5px 0 10px; width: 38px; letter-spacing: -0.35px; }

/* ribbon */
.ribbon { height: 113px; background: #fafafa; flex: none; display: flex; position: relative; z-index: 2; box-shadow: 0 1px 4px rgba(0,0,0,.16); }
.group { height: 111px; border-right: 1px solid #d2d0ce; display: flex; flex-direction: column; align-items: center; }
.tools { display: flex; height: 97px; width: 100%; padding-top: 7px; }
.cap { font-size: 12px; line-height: 16px; color: #323130; margin-top: -1px; }
.g-clip { width: 201px; }
.g-data { width: 449px; } .g-data .tools { padding-left: 4px; }
.g-query { width: 145px; } .g-query .tools { padding-left: 12px; }
.g-insert { width: 183px; } .g-insert .tools { padding-left: 8px; }
.g-calc { width: 233px; } .g-calc .tools { padding-left: 12px; }
.g-sens { width: 92px; }
.g-share { width: 74px; }
.g-copilot { width: 164px; } .g-copilot .tools { padding-left: 10px; }
.rb { display: flex; flex-direction: column; align-items: center; flex: none; font-size: 14.500px; line-height: 20px; letter-spacing: -0.2px; text-align: center; white-space: nowrap; }
.rb > span { margin-top: 2px; }
.rb > .cop { margin: 1px 0 3px; }
.rb .r3 { margin-left: 6px; }
.dd { display: inline-block; margin-left: 2px; }
.dim { color: #c4c2c0; }
.w-paste { width: 58px; margin-left: 6px; }
.w-paste > svg { margin-left: 6px; }
.w39 { width: 39px; } .w50 { width: 50px; } .w52 { width: 52px; } .w54 { width: 54px; } .w58 { width: 58px; } .w60 { width: 60px; } .w62 { width: 62px; } .w66 { width: 66px; } .w73 { width: 73px; } .w76 { width: 76px; } .w78 { width: 78px; } .w88 { width: 88px; } .w90 { width: 90px; } .w92 { width: 92px; }
.clip-list { margin: -7px 0 0 1px; }
.clip-list div { display: flex; align-items: center; height: 30px; }
.clip-list span { margin-left: 5px; white-space: nowrap; font-size: 14.500px; letter-spacing: -0.2px; }
.fx { font-family: "Liberation Serif", serif; font-style: italic; font-weight: 700; }
.collapse { margin: 98px 0 0 362px; }

/* work area */
.work { height: 790px; flex: none; display: flex; }
.rail { width: 51px; border-right: 1px solid #e1dfdd; background: #f3f2f1; }
.rail div { height: 50px; display: flex; align-items: center; justify-content: center; padding-bottom: 1px; }
.rail .on { border-left: 3px solid #117865; padding-right: 3px; }
.center { width: 1417px; display: flex; flex-direction: column; }
.stage { display: flex; height: 746px; }
.canvas { width: 1167px; background: #fff9f5; position: relative; }
.page { position: absolute; left: 0; top: 0; width: 1166px; height: 656px; border: 1px solid #000; }
.dots { position: absolute; left: 2px; top: 656px; width: 1164px; height: 2px; background: repeating-linear-gradient(90deg, #555 0 2px, #fff9f5 2px 4px); }
.headline { position: absolute; left: 173px; top: 47px; margin: 0; font: 700 54px/60px "Liberation Serif", serif; letter-spacing: -0.4px; color: #8fc1ea; white-space: nowrap; }
.cscroll { position: absolute; right: 5px; top: 33px; width: 7px; height: 57px; background: #c8c6c4; }
.vactions { position: absolute; left: 1066px; top: 73px; width: 98px; height: 29px; background: rgba(255,255,255,.65); display: flex; align-items: center; padding-left: 5px; gap: 15px; }
.chart { position: absolute; left: 0; top: 102px; }
.c-title { font-size: 10.500px; fill: #c4c2c0; }
.c-cat { font-size: 9.500px; fill: #605e5c; }
.c-ax { font-size: 9.500px; font-weight: 600; fill: #666; text-anchor: middle; }
.slicer { position: absolute; color: #9fd2ff; font-size: 18px; font-weight: 700; letter-spacing: -0.1px; }
.s-head { display: flex; font: 700 24px/23px "Liberation Serif", serif; letter-spacing: 0; color: #ea8c62; }
.s-row { display: flex; align-items: center; height: 26px; }
.box { width: 20px; height: 20px; border: 1.500px solid #c8c6c4; background: #fffaf7; }
.box.full { background: #222; border-color: #777; }
.gender { left: 390px; top: 383px; width: 232px; }
.gender .s-head { width: 225px; height: 23px; background: #fff; justify-content: space-between; font-size: 23px; }
.gender .s-head svg { margin-top: 5px; }
.gender .s-row { margin-top: 17px; }
.gender .s-row + .s-row { margin-top: 28px; }
.gender .s-row span { margin-left: 7px; flex: 1; background: #fff; height: 26px; line-height: 28px; }
.category { left: 681px; top: 383px; }
.category .s-head { padding-left: 1px; }
.category .s-row { margin-top: 15px; }
.category .s-row + .s-row { margin-top: 25px; }
.category .s-row span { margin-left: 7px; letter-spacing: 0.1px; }
.notes { position: absolute; left: 14px; top: 550px; font-size: 20px; color: #6f7cab; white-space: nowrap; }
.notes p { margin: 0; height: 44px; line-height: 44px; display: flex; align-items: center; }
.notes i { width: 3px; height: 3px; background: #333; margin-right: 3px; margin-top: 4px; }
.n1 { letter-spacing: -1.2px; }
.n2 { letter-spacing: -1.03px; }

/* filters */
.filters { width: 250px; background: #fff; padding-top: 1px; color: #1a1a1a; }
.f-top { height: 104px; border-bottom: 1px solid #c8c6c4; padding: 13px 15px 0 10px; }
.f-head { display: flex; align-items: center; height: 20px; padding-left: 4px; }
.f-head b { font-size: 19px; font-weight: 600; margin-left: 9px; letter-spacing: -0.3px; width: 132px; margin-top: 3px; }
.f-head .eye { margin-left: 9px; margin-right: 22px; }
.f-search { margin-top: 23px; height: 42px; width: 225px; border: 1px solid #b3b0ad; border-radius: 2px; display: flex; align-items: center; padding-left: 12px; }
.f-search span { margin: 2px 0 0 13px; font-size: 16px; letter-spacing: -0.4px; }
.f-row { display: flex; justify-content: space-between; align-items: center; height: 24px; margin: 18px 13px 0 10px; font-size: 14.500px; letter-spacing: -0.05px; }
.f-row em { letter-spacing: 1.500px; }
.f-box { margin: 10px 10px 0; height: 57px; border: 1px solid #c8c6c4; border-radius: 2px; display: flex; align-items: center; justify-content: center; width: 230px; letter-spacing: -0.3px; }
.f-row.second { margin-top: 31px; }
.f-row.second + .f-box { margin-top: 10px; line-height: 18px; padding-bottom: 1px; }

/* page tabs */
.tabs { height: 44px; display: flex; background: #f3f2f1; }
.t-desk { margin-left: 13px; width: 30px; height: 38px; border-bottom: 3px solid #117865; padding: 8px 0 0 2px; }
.t-phone { margin: 6px 0 0 31px; }
.arr { border: 7px solid transparent; height: 0; margin-top: 14px; }
.arr.l { border-right: 6px solid #c8c6c4; border-left: 0; margin-left: 26px; }
.arr.r { border-left: 6px solid #c8c6c4; border-right: 0; margin-left: 22px; margin-right: 8px; }
.tab { width: 95px; background: #fff; border-left: 1px solid #b3b0ad; text-align: center; line-height: 45px; letter-spacing: -0.2px; }
.tab.cur { width: 97px; font-weight: 600; letter-spacing: -0.5px; border-bottom: 5px solid #117865; }
.add { width: 50px; background: #117865; display: flex; align-items: center; justify-content: center; padding-bottom: 3px; }

/* visualizations */
.viz { width: 226px; border-left: 1px solid #e1dfdd; background: #f3f2f1; }
.p-head { display: flex; justify-content: space-between; align-items: center; height: 50px; padding: 0 10px 2px 10px; }
.p-head b { font-size: 19px; font-weight: 600; letter-spacing: -0.35px; margin-top: 1px; }
.v-sub { padding-left: 10px; line-height: 18px; height: 22px; margin: -1px 0 1px; font-size: 14.500px; font-weight: 600; letter-spacing: -0.25px; }
.v-tabs { display: flex; padding-left: 10px; height: 40px; }
.v-sel { width: 40px; height: 40px; background: #d2d0ce; border-radius: 3px; padding: 4px; }
.v-brush { margin: 4px 0 0 47px; }
.v-line { margin-top: 5px; }
.v-grid { margin: 14px 0 0 14px; display: grid; grid-template-columns: repeat(6, 24px); gap: 11px; }
.v-grid svg { width: 24px; height: 24px; fill: none; stroke: #444; stroke-width: 1.500; }
.v-grid .b { fill: #83beec; stroke: #1068b0; }
.v-grid .bl { stroke: #1068b0; }
.v-grid .w { fill: #fbfbfb; }
.v-grid .g { fill: #c8c6c4; stroke: #888; }
.v-grid .g.dk { stroke: #444; }
.v-grid .o { fill: #f9b35a; stroke: #d87000; }
.v-grid .pu { stroke: #9b3fa8; stroke-width: 1.200; fill: #faf2fb; }
.v-grid .pa { stroke: #1a7fe0; fill: #fff; }
.v-more { padding: 20px 0 0 15px; height: 46px; border-bottom: 1px solid #d8d6d4; }
.v-wells { padding: 8px 7px 0 5px; }
.lbl { padding-left: 10px; line-height: 24px; }
.well { margin-top: 5px; height: 35px; border: 1px dashed #bebbb8; border-radius: 2px; background: #fff; line-height: 32px; padding-left: 12px; letter-spacing: -0.3px; }
.lbl.drill { margin-top: 11px; font-weight: 600; color: #484644; letter-spacing: -0.25px; }
.opt { display: flex; justify-content: space-between; align-items: center; padding: 0 20px 0 10px; height: 34px; margin-top: 2px; letter-spacing: -0.25px; }
.opt.keep { margin-top: 0; }
.tog { width: 40px; height: 20px; border: 1px solid #777; border-radius: 10px; background: #fff; display: flex; align-items: center; font-size: 11px; padding: 1px 5px; gap: 2px; color: #555; }
.tog i { width: 10px; height: 10px; border-radius: 50%; background: #605e5c; }
.tog.on { background: #117865; border-color: #117865; color: #fff; gap: 4px; }
.tog.on i { background: #fff; }
.well.dr { margin-top: 7px; height: 32px; line-height: 30px; padding-left: 10px; white-space: nowrap; }

/* data */
.data { width: 226px; border-left: 1px solid #e1dfdd; background: #f3f2f1; }
.data .p-head { padding-left: 10px; padding-right: 10px; }
.d-search { margin: 7px 0 0 6px; width: 214px; height: 30px; background: #fff; border: 1px solid #c8c6c4; border-bottom-color: #605e5c; border-radius: 5px; display: flex; align-items: center; padding-left: 14px; color: #605e5c; font-size: 16px; letter-spacing: -0.25px; }
.d-search span { margin: 1px 0 0 7px; }
.tree-wrap { display: flex; margin-top: 10px; height: 683px; overflow: hidden; }
.tree { width: 210px; padding-top: 1px; }
.row { display: flex; align-items: center; height: 30px; padding-left: 36px; white-space: nowrap; font-size: 14.500px; letter-spacing: -0.15px; }
.row.root { padding-left: 17px; }
.row.l2 { padding-left: 55px; }
.row.l3 { padding-left: 74px; }
.ch { width: 14px; margin-right: 5px; }
.cb { width: 15px; height: 15px; border: 1px solid #777; border-radius: 2px; margin-right: 10px; }
.ic { width: 15px; margin-right: 7px; }
.tab-ic { margin-right: 7px; }
.root span { letter-spacing: 0; }
.dscroll { width: 10px; height: 673px; background: #8a8886; }

/* status bar */
.status { height: 30px; flex: none; border-top: 1px solid #dcdad8; border-bottom: 1.500px solid #000; background: #f3f2f1; display: flex; align-items: center; padding-left: 5px; white-space: nowrap; color: #484644; }
.pg { width: 1410px; margin-top: 2px; font-size: 14.500px; flex: none; }
.minus { width: 6px; margin-right: 6px; font-size: 16px; color: #484644; }
.plus { width: 10px; margin: -2px 16px 0 6px; font-size: 18px; font-weight: 600; }
.pct { width: 30px; margin: -1px 23px 0 0; font-size: 14.500px; color: #605e5c; }
.upd { margin: 1px 0 0 16px; letter-spacing: -0.32px; }

/* taskbar */
.taskbar { height: 60px; flex: none; background: #eee; border-top: 1px solid #bbb; display: flex; font-size: 14.500px; line-height: 20px; }
.weather { display: flex; width: 547px; padding: 6px 0 0 24px; }
.weather div { display: flex; flex-direction: column; margin: 2px 0 0 2px; font-size: 14px; line-height: 20px; }
.hz { color: #555; }
.apps { display: flex; width: 828px; }
.apps div { width: 55.150px; height: 57px; display: flex; align-items: center; justify-content: center; position: relative; }
.apps svg { width: 29px; height: 29px; }
.run::after { content: ""; position: absolute; bottom: 1px; width: 8px; height: 4px; border-radius: 2px; background: #858585; }
.apps .big { background: #f9f9f9; border-radius: 5px; width: 47px; margin: 4px 4px 0; height: 50px; padding-bottom: 1px; }
.apps .big::after { width: 20px; background: #2a8594; bottom: -2px; }
.tray { display: flex; align-items: center; padding-bottom: 2px; padding-left: 181px; white-space: nowrap; }
.kb { margin: 0 22px 0 23px; }
.lang { width: 29px; text-align: center; display: flex; flex-direction: column; line-height: 20px; }
.wifi { margin-left: 22px; }
.vol { margin-left: 9px; }
.bat { margin-left: 9px; }
.clock { margin-left: 16px; width: 81px; display: flex; flex-direction: column; text-align: right; letter-spacing: 0.1px; }
.bell { margin-left: 11px; }
```
